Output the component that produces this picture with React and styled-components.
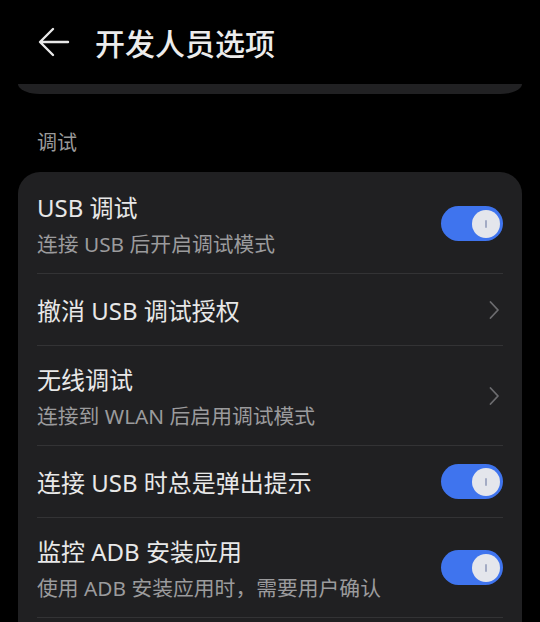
import React, { useState } from 'react';
import styled, { createGlobalStyle } from 'styled-components';

const GlobalStyle = createGlobalStyle`
  body {
    margin: 0;
    background: #000;
    font-family: "Noto Sans", "Noto Sans CJK SC", sans-serif;
    color: #e6e6e6;
  }
`;

const items = [
  { title: 'USB 调试', sub: '连接 USB 后开启调试模式', kind: 'toggle' },
  { title: '撤消 USB 调试授权', kind: 'link' },
  { title: '无线调试', sub: '连接到 WLAN 后启用调试模式', kind: 'link' },
  { title: '连接 USB 时总是弹出提示', kind: 'toggle' },
  { title: '监控 ADB 安装应用', sub: '使用 ADB 安装应用时，需要用户确认', kind: 'toggle' },
];

function App() {
  const [on, setOn] = useState({ 0: true, 3: true, 4: true });

  return (
    <Page>
      <GlobalStyle />
      <Header>
        <BackButton aria-label="返回">
          <svg width="32" height="30" viewBox="0 0 32 30" fill="none">
            <path d="M30 15H3M15 2L2 15l13 13" stroke="#e8e8e8" strokeWidth="2.4" strokeLinecap="round" strokeLinejoin="round" />
          </svg>
        </BackButton>
        <Title>开发人员选项</Title>
      </Header>
      <PrevCard />

      <SectionLabel>调试</SectionLabel>
      <Card>
        {items.map((item, i) => (
          <Row key={item.title} $tall={!!item.sub}>
            <Texts $tall={!!item.sub}>
              <ItemTitle>{item.title}</ItemTitle>
              {item.sub && <ItemSub>{item.sub}</ItemSub>}
            </Texts>
            {item.kind === 'toggle' ? (
              <Switch $on={on[i]} onClick={() => setOn({ ...on, [i]: !on[i] })}>
                <Knob $on={on[i]} />
              </Switch>
            ) : (
              <Chevron width="12" height="20" viewBox="0 0 12 20" fill="none">
                <path d="M2.5 2l7.5 8-7.5 8" stroke="#6c6c6f" strokeWidth="1.8" strokeLinecap="round" strokeLinejoin="round" />
              </Chevron>
            )}
          </Row>
        ))}
      </Card>
    </Page>
  );
}

const Page = styled.div`
  width: 540px;
  height: 622px;
  overflow: hidden;
`;

const Header = styled.div`
  height: 84px;
  display: flex;
  align-items: center;
  padding: 0 0 0 38px;
  gap: 25px;
`;

const BackButton = styled.div`
  display: flex;
  align-items: center;
  height: 30px;
`;

const Title = styled.h1`
  margin: 0;
  font-size: 30px;
  font-weight: 500;
  color: #ececec;
`;

const PrevCard = styled.div`
  height: 10px;
  margin: 0 18px;
  background: #212123;
  border-radius: 0 0 22px 22px / 0 0 10px 10px;
`;

const SectionLabel = styled.div`
  padding: 35px 37px 0;
  height: 28px;
  line-height: 28px;
  font-size: 20px;
  color: #9a9a9a;
  margin-bottom: 15px;
`;

const Card = styled.div`
  margin: 0 18px;
  padding: 2px 0 60px;
  background: #202022;
  border-radius: 22px;
`;

const Row = styled.div`
  margin: 0 19px;
  height: ${p => (p.$tall ? 99 : 71)}px;
  border-bottom: 1px solid #333335;
  display: flex;
  align-items: center;
  justify-content: space-between;
`;

const Texts = styled.div`
  display: flex;
  flex-direction: column;
  gap: 4px;
  padding-top: ${p => (p.$tall ? 6 : 2)}px;
`;

const ItemTitle = styled.div`
  font-size: 24px;
  line-height: 32px;
  color: #e8e8e8;
`;

const ItemSub = styled.div`
  font-size: 20.8px;
  line-height: 33px;
  color: #9b9b9d;
`;

const Chevron = styled.svg`
  margin-right: 3px;
`;

const Switch = styled.div`
  width: 62px;
  height: 35px;
  border-radius: 18px;
  background: ${p => (p.$on ? '#3f74ee' : '#4a4a4d')};
  display: flex;
  align-items: center;
  justify-content: ${p => (p.$on ? 'flex-end' : 'flex-start')};
  padding: 0 3.5px;
  box-sizing: border-box;
  cursor: pointer;
`;

const Knob = styled.div`
  width: 28px;
  height: 28px;
  border-radius: 50%;
  background: #e4e6ec;
  display: flex;
  align-items: center;
  justify-content: center;
  &::after {
    content: '';
    width: 2px;
    height: 8px;
    border-radius: 1px;
    background: ${p => (p.$on ? '#a3abc4' : '#999')};
  }
`;

export default App;
